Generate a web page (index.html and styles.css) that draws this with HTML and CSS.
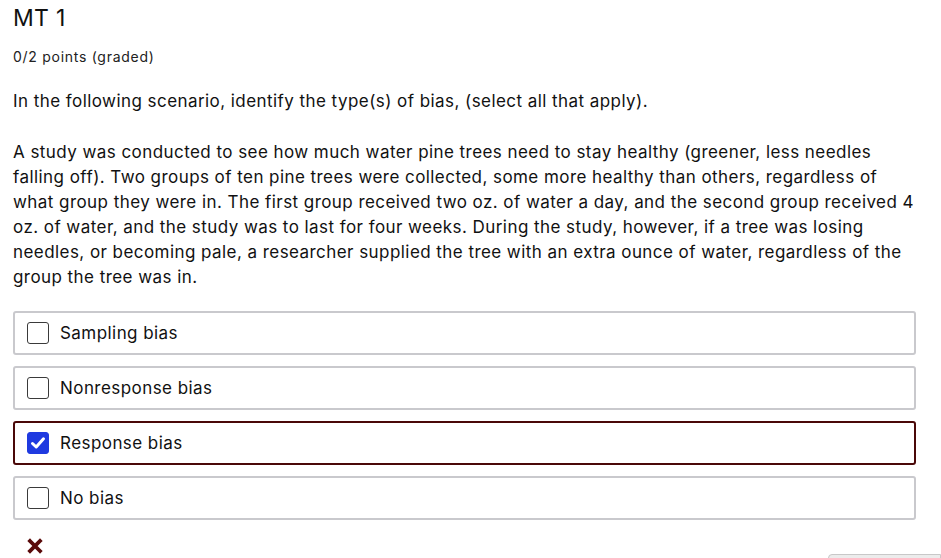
FILE: index.html
```html
<!DOCTYPE html>
<html>
<head>
<meta charset="utf-8">
<link rel="stylesheet" href="styles.css">
</head>
<body>
<div class="problem">
  <h3 class="title">MT 1</h3>
  <div class="points">0/2 points (graded)</div>
  <p class="prompt">In the following scenario, identify the type(s) of bias, (select all that apply).</p>
  <p class="prompt">A study was conducted to see how much water pine trees need to stay healthy (greener, less needles falling off). Two groups of ten pine trees were collected, some more healthy than others, regardless of what group they were in. The first group received two oz. of water a day, and the second group received 4 oz. of water, and the study was to last for four weeks. During the study, however, if a tree was losing needles, or becoming pale, a researcher supplied the tree with an extra ounce of water, regardless of the group the tree was in.</p>
  <div class="choices">
    <label class="choice"><span class="box"></span><span class="label">Sampling bias</span></label>
    <label class="choice"><span class="box"></span><span class="label">Nonresponse bias</span></label>
    <label class="choice selected"><span class="box checked"><svg width="18" height="18" viewBox="0 0 18 18"><path d="M3.5 9.5 L7.2 13 L14.5 4.8" fill="none" stroke="#fff" stroke-width="3" stroke-linecap="round" stroke-linejoin="round"/></svg></span><span class="label">Response bias</span></label>
    <label class="choice"><span class="box"></span><span class="label">No bias</span></label>
  </div>
  <div class="status">
    <svg class="xmark" width="16" height="16" viewBox="0 0 16 16"><path d="M3 3 L13 13 M13 3 L3 13" stroke="#5a0a0a" stroke-width="3.8" stroke-linecap="square"/></svg>
  </div>
  <div class="actions"><span class="submit"></span></div>
</div>
</body>
</html>
```
FILE: styles.css
```css
html, body {
  margin: 0;
  padding: 0;
  background: #fff;
}
body {
  font-family: Inter, "Liberation Sans", sans-serif;
  color: #222;
  overflow: hidden;
  height: 558px;
}
.problem {
  padding: 0 25px 0 13px;
}
.title {
  margin: 0;
  padding-top: 2px;
  font-size: 23px;
  font-weight: 400;
  line-height: 32px;
  letter-spacing: 0.3px;
  color: #111;
}
.points {
  margin-top: 13px;
  font-size: 14px;
  line-height: 20px;
  letter-spacing: 0.72px;
  color: #222;
}
.prompt {
  margin: 22px 0 0;
  font-size: 17px;
  line-height: 25px;
  letter-spacing: 0.44px;
  color: #111;
}
.prompt + .prompt {
  margin-top: 26px;
}
.choices {
  margin-top: 21px;
  display: flex;
  flex-direction: column;
  gap: 11px;
}
.choice {
  display: flex;
  align-items: center;
  height: 44px;
  box-sizing: border-box;
  border: 2px solid #c9c9cd;
  border-radius: 3px;
  padding-left: 12px;
}
.choice.selected {
  border-color: #4a0808;
}
.box {
  width: 22px;
  height: 22px;
  box-sizing: border-box;
  border: 1px solid #3a3a3a;
  border-radius: 3px;
  background: #fff;
  display: flex;
  align-items: center;
  justify-content: center;
  flex: none;
}
.box.checked {
  background: #1f3ae0;
  border-color: #1f3ae0;
}
.label {
  margin-left: 11px;
  font-size: 17px;
  letter-spacing: 0.44px;
  color: #111;
}
.status {
  height: 30px;
  padding: 13px 0 0 14px;
  box-sizing: border-box;
  margin-top: 4px;
  display: flex;
  align-items: flex-end;
}
.actions {
  display: flex;
  justify-content: flex-end;
  margin-right: -25px;
}
.submit {
  width: 111px;
  height: 30px;
  background: #ececec;
  border: 1px solid #c8c8c8;
  border-radius: 4px 0 0 0;
}
```
